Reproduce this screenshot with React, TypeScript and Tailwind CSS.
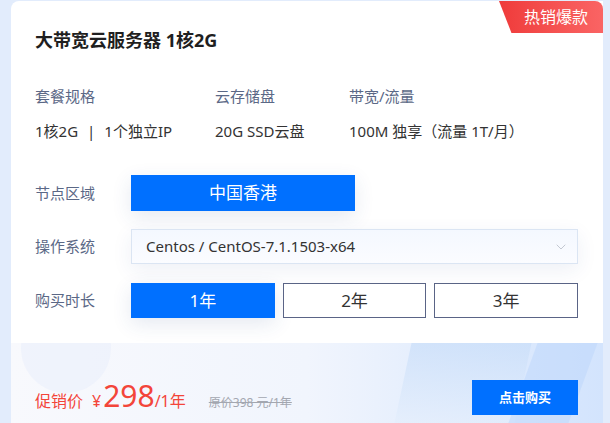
import { ChevronDown } from 'lucide-react'

const font = { fontFamily: '"Noto Sans", "Noto Sans CJK SC", sans-serif' }

const specs = [
  {
    label: '套餐规格',
    value: (
      <>
        1核2G<span className="mx-[9px]">|</span>1个独立IP
      </>
    ),
  },
  { label: '云存储盘', value: '20G SSD云盘' },
  { label: '带宽/流量', value: '100M 独享（流量 1T/月）' },
]

export default function App() {
  return (
    <div
      className="w-[610px] h-[423px] overflow-hidden bg-[#e2ecfc] pl-[11px] pr-[7px] pt-px"
      style={font}
    >
      <div className="relative flex h-[422px] flex-col overflow-hidden rounded-tl-lg bg-white">
        {/* badge */}
        <div className="absolute right-0 top-0 flex h-[32px] w-[104px] items-center justify-end rounded-tr-lg bg-gradient-to-r from-[#ef3a3a] to-[#fa6464] pr-[15px] text-[16px] text-white [clip-path:polygon(0_0,100%_0,100%_100%,12%_100%)]">
          热销爆款
        </div>

        <div className="pl-[24px] pr-[25px]">
          <h1 className="mt-[27px] h-[24px] text-[18px] font-bold leading-[24px] text-[#1f1f1f]">
            大带宽云服务器 1核2G
          </h1>

          <div className="mt-[33px] grid grid-cols-[180px_134px_1fr]">
            {specs.map((s) => (
              <div key={s.label} className="flex flex-col">
                <span className="h-[22px] text-[15px] leading-[22px] text-[#5b6886]">{s.label}</span>
                <span className="mt-[13px] h-[22px] text-[15px] leading-[22px] text-[#333]">{s.value}</span>
              </div>
            ))}
          </div>

          <div className="mt-[33px] flex items-center">
            <span className="w-[96px] text-[15px] text-[#5b6886]">节点区域</span>
            <div className="flex h-[36px] w-[224px] items-center justify-center bg-[#0070ff] text-[17px] text-white shadow-[0_6px_20px_rgba(40,70,140,0.12)]">
              中国香港
            </div>
          </div>

          <div className="mt-[18px] flex items-center">
            <span className="w-[96px] text-[15px] text-[#5b6886]">操作系统</span>
            <div className="flex h-[35px] flex-1 items-center justify-between border border-[#dbe5f3] bg-gradient-to-b from-[#f4f8ff] to-[#fbfcff] pl-[14px] pr-[8px] text-[15px] text-[#333] shadow-[0_6px_20px_rgba(40,70,140,0.08)]">
              <span>Centos / CentOS-7.1.1503-x64</span>
              <ChevronDown className="h-[16px] w-[16px] text-[#c3c8d2]" strokeWidth={1.5} />
            </div>
          </div>

          <div className="mt-[19px] flex items-center">
            <span className="w-[96px] text-[15px] text-[#5b6886]">购买时长</span>
            <div className="grid flex-1 grid-cols-3 gap-[8px]">
              <div className="flex h-[35px] items-center justify-center bg-[#0070ff] text-[17px] text-white shadow-[0_6px_20px_rgba(40,70,140,0.12)]">
                1年
              </div>
              <div className="flex h-[35px] items-center justify-center border border-[#5a6486] bg-white text-[17px] text-[#333]">
                2年
              </div>
              <div className="flex h-[35px] items-center justify-center border border-[#5a6486] bg-white text-[17px] text-[#333]">
                3年
              </div>
            </div>
          </div>
        </div>

        {/* bottom price bar */}
        <div className="relative mt-[25px] flex flex-1 items-end justify-between overflow-hidden bg-gradient-to-r from-[#f8f9fd] via-[#f1f5fd] to-[#d3e4fd] pb-[8px] pl-[24px] pr-[25px]">
          <div className="pointer-events-none absolute left-[10px] top-[-40px] h-[90px] w-[90px] rounded-full bg-[#e8eefb] opacity-50" />
          <div className="pointer-events-none absolute right-[80px] top-0 h-[80px] w-[120px] skew-x-[-12deg] bg-gradient-to-b from-[#c9def9] to-[#e4eefc] opacity-70" />
          <div className="pointer-events-none absolute right-[20px] top-0 h-[80px] w-[60px] skew-x-[-20deg] bg-[#bcd6fb] opacity-50" />

          <div className="relative flex items-baseline pb-[2px] text-[#f3453a]">
            <span className="text-[16px]">促销价</span>
            <span className="ml-[9px] text-[16px]">¥</span>
            <span className="ml-[2px] text-[30px] leading-none">298</span>
            <span className="text-[16px]">/1年</span>
            <span className="ml-[23px] text-[12px] text-[#a3a7b0] line-through">原价398 元/1年</span>
          </div>

          <button className="relative flex h-[35px] w-[106px] items-center justify-center bg-[#0070ff] text-[13px] font-bold text-white">
            点击购买
          </button>
        </div>
      </div>
    </div>
  )
}
